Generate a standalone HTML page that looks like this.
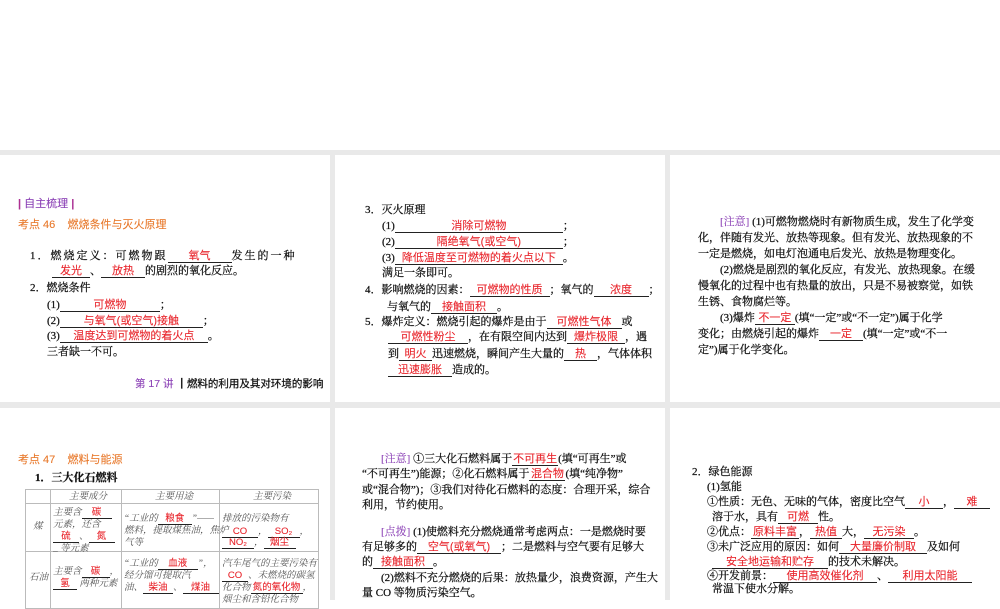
<!DOCTYPE html>
<html><head><meta charset="utf-8"><style>
*{margin:0;padding:0;box-sizing:border-box}
body{width:1000px;height:600px;position:relative;background:#fff;overflow:hidden;font-family:"Liberation Serif","Noto Serif CJK SC","Noto Sans CJK SC",serif;color:#111;font-size:11px;-webkit-text-stroke:0.25px #111}
.g{position:absolute;background:#e9e9e9}
.l{position:absolute;white-space:nowrap;line-height:14px;height:14px}
.b{display:inline-block;border-bottom:1px solid #222;color:#e8232a;-webkit-text-stroke:0.1px #e8232a;text-align:center;line-height:12px;font-family:"Liberation Sans","Noto Sans CJK SC",sans-serif}
.p{color:#8a3fb5;-webkit-text-stroke:0.1px #8a3fb5}
.o{color:#e8782a;-webkit-text-stroke:0.1px #e8782a;font-family:"Liberation Sans","Noto Sans CJK SC",sans-serif}
.t{position:absolute;border:1px solid #bbb}
.tc{position:absolute;font-size:9.5px;font-style:italic;color:#555;-webkit-text-stroke:0;line-height:12px;white-space:nowrap}
.tc .b{font-style:normal;font-size:9.5px;line-height:10px}
</style></head><body>
<div class="g" style="left:0;top:150px;width:1000px;height:5px"></div>
<div class="g" style="left:0;top:402px;width:1000px;height:6px"></div>
<div class="g" style="left:330px;top:150px;width:5px;height:450px"></div>
<div class="g" style="left:665px;top:150px;width:5px;height:450px"></div>

<!-- slide 1 -->
<div class="l p" style="left:18px;top:197px;font-family:'Liberation Sans','Noto Sans CJK SC',sans-serif"><b style="color:#b03090">|</b> 自主梳理 <b style="color:#b03090">|</b></div>
<div class="l o" style="left:18px;top:218px">考点 46&nbsp;&nbsp;&nbsp; 燃烧条件与灭火原理</div>
<div class="l" style="left:30px;top:249px;letter-spacing:2px">1．燃烧定义：可燃物跟<span class="b" style="width:64px;letter-spacing:0">氧气</span>发生的一种</div>
<div class="l" style="left:52px;top:264px"><span class="b" style="width:38px">发光</span>、<span class="b" style="width:44px">放热</span>的剧烈的氧化反应。</div>
<div class="l" style="left:30px;top:281px">2．燃烧条件</div>
<div class="l" style="left:47px;top:298px">(1)<span class="b" style="width:100px">可燃物</span>；</div>
<div class="l" style="left:47px;top:314px">(2)<span class="b" style="width:143px">与氧气(或空气)接触</span>；</div>
<div class="l" style="left:47px;top:329px">(3)<span class="b" style="width:148px">温度达到可燃物的着火点</span>。</div>
<div class="l" style="left:47px;top:345px">三者缺一不可。</div>
<div class="l" style="left:135px;top:377px;font-size:10.5px;font-family:'Liberation Sans','Noto Sans CJK SC',sans-serif"><span class="p">第 17 讲</span> <b>┃</b>燃料的利用及其对环境的影响</div>

<!-- slide 2 -->
<div class="l" style="left:365px;top:203px">3．灭火原理</div>
<div class="l" style="left:382px;top:219px">(1)<span class="b" style="width:168px">消除可燃物</span>；</div>
<div class="l" style="left:382px;top:235px">(2)<span class="b" style="width:168px">隔绝氧气(或空气)</span>；</div>
<div class="l" style="left:382px;top:251px">(3)<span class="b" style="width:168px">降低温度至可燃物的着火点以下</span>。</div>
<div class="l" style="left:382px;top:266px">满足一条即可。</div>
<div class="l" style="left:365px;top:283px">4．影响燃烧的因素：<span class="b" style="width:80px">可燃物的性质</span>；氧气的<span class="b" style="width:55px">浓度</span>；</div>
<div class="l" style="left:387px;top:300px">与氧气的<span class="b" style="width:66px">接触面积</span>。</div>
<div class="l" style="left:365px;top:315px">5．爆炸定义：燃烧引起的爆炸是由于<span class="b" style="width:75px">可燃性气体</span>或</div>
<div class="l" style="left:388px;top:330px"><span class="b" style="width:80px">可燃性粉尘</span>，在有限空间内达到<span class="b" style="width:58px">爆炸极限</span>，遇</div>
<div class="l" style="left:388px;top:347px">到<span class="b" style="width:33px">明火</span>迅速燃烧，瞬间产生大量的<span class="b" style="width:33px">热</span>，气体体积</div>
<div class="l" style="left:388px;top:363px"><span class="b" style="width:64px">迅速膨胀</span>造成的。</div>

<!-- slide 3 -->
<div class="l" style="left:720px;top:215px"><span class="p">[注意]</span> (1)可燃物燃烧时有新物质生成，发生了化学变</div>
<div class="l" style="left:698px;top:231px">化，伴随有发光、放热等现象。但有发光、放热现象的不</div>
<div class="l" style="left:698px;top:247px">一定是燃烧，如电灯泡通电后发光、放热是物理变化。</div>
<div class="l" style="left:720px;top:263px">(2)燃烧是剧烈的氧化反应，有发光、放热现象。在缓</div>
<div class="l" style="left:698px;top:279px">慢氧化的过程中也有热量的放出，只是不易被察觉，如铁</div>
<div class="l" style="left:698px;top:295px">生锈、食物腐烂等。</div>
<div class="l" style="left:720px;top:311px">(3)爆炸<span class="b" style="width:40px">不一定</span>(填“一定”或“不一定”)属于化学</div>
<div class="l" style="left:698px;top:327px">变化；由燃烧引起的爆炸<span class="b" style="width:44px">一定</span>(填“一定”或“不一</div>
<div class="l" style="left:698px;top:343px">定”)属于化学变化。</div>

<!-- slide 4 -->
<div class="l o" style="left:18px;top:453px">考点 47&nbsp;&nbsp;&nbsp; 燃料与能源</div>
<div class="l" style="left:35px;top:471px;font-weight:bold">1．三大化石燃料</div>
<div class="t" style="left:25px;top:489px;width:294px;height:120px"></div>
<div class="g" style="left:25px;top:503px;width:294px;height:1px;background:#bbb"></div>
<div class="g" style="left:25px;top:551px;width:294px;height:1px;background:#bbb"></div>
<div class="g" style="left:50px;top:489px;width:1px;height:120px;background:#bbb"></div>
<div class="g" style="left:121px;top:489px;width:1px;height:120px;background:#bbb"></div>
<div class="g" style="left:219px;top:489px;width:1px;height:120px;background:#bbb"></div>
<div class="tc" style="left:69px;top:491px">主要成分</div>
<div class="tc" style="left:155px;top:491px">主要用途</div>
<div class="tc" style="left:253px;top:491px">主要污染</div>
<div class="tc" style="left:33px;top:521px">煤</div>
<div class="tc" style="left:53px;top:507px">主要含<span class="b" style="width:30px">碳</span></div>
<div class="tc" style="left:53px;top:519px">元素，还含</div>
<div class="tc" style="left:53px;top:531px"><span class="b" style="width:26px">硫</span>、<span class="b" style="width:26px">氮</span></div>
<div class="tc" style="left:53px;top:543px">_ 等元素</div>
<div class="tc" style="left:124px;top:513px">“工业的<span class="b" style="width:34px">粮食</span>”——</div>
<div class="tc" style="left:124px;top:525px">燃料，提取煤焦油，焦炉</div>
<div class="tc" style="left:124px;top:537px">气等</div>
<div class="tc" style="left:222px;top:513px">排放的污染物有</div>
<div class="tc" style="left:222px;top:526px"><span class="b" style="width:36px">CO</span>，<span class="b" style="width:32px">SO₂</span>，</div>
<div class="tc" style="left:222px;top:537px"><span class="b" style="width:32px">NO₂</span>，<span class="b" style="width:32px">烟尘</span></div>
<div class="tc" style="left:29px;top:572px">石油</div>
<div class="tc" style="left:53px;top:566px">主要含<span class="b" style="width:28px">碳</span>，</div>
<div class="tc" style="left:53px;top:578px"><span class="b" style="width:24px">氢</span> 两种元素</div>
<div class="tc" style="left:124px;top:558px">“工业的<span class="b" style="width:40px">血液</span>”，</div>
<div class="tc" style="left:124px;top:570px">经分馏可提取汽</div>
<div class="tc" style="left:124px;top:582px">油、<span class="b" style="width:30px">柴油</span>、<span class="b" style="width:36px">煤油</span></div>
<div class="tc" style="left:222px;top:558px">汽车尾气的主要污染有</div>
<div class="tc" style="left:222px;top:570px"><span class="b" style="width:26px">CO</span>、未燃烧的碳氢</div>
<div class="tc" style="left:222px;top:582px">化合物<span class="b" style="width:52px">氮的氧化物</span>，</div>
<div class="tc" style="left:222px;top:594px">烟尘和含铅化合物</div>

<!-- slide 5 -->
<div class="l" style="left:381px;top:452px"><span class="p">[注意]</span> ①三大化石燃料属于<span class="b" style="width:46px">不可再生</span>(填“可再生”或</div>
<div class="l" style="left:362px;top:467px">“不可再生”)能源；②化石燃料属于<span class="b" style="width:36px">混合物</span>(填“纯净物”</div>
<div class="l" style="left:362px;top:483px">或“混合物”)；③我们对待化石燃料的态度：合理开采，综合</div>
<div class="l" style="left:362px;top:498px">利用，节约使用。</div>
<div class="l" style="left:381px;top:525px"><span class="p">[点拨]</span> (1)使燃料充分燃烧通常考虑两点：一是燃烧时要</div>
<div class="l" style="left:362px;top:540px">有足够多的<span class="b" style="width:84px">空气(或氧气)</span>；二是燃料与空气要有足够大</div>
<div class="l" style="left:362px;top:555px">的<span class="b" style="width:60px">接触面积</span>。</div>
<div class="l" style="left:381px;top:571px">(2)燃料不充分燃烧的后果：放热量少，浪费资源，产生大</div>
<div class="l" style="left:362px;top:586px">量 CO 等物质污染空气。</div>

<!-- slide 6 -->
<div class="l" style="left:692px;top:465px">2．绿色能源</div>
<div class="l" style="left:707px;top:480px">(1)氢能</div>
<div class="l" style="left:707px;top:495px">①性质：无色、无味的气体，密度比空气<span class="b" style="width:38px">小</span>，<span class="b" style="width:36px">难</span></div>
<div class="l" style="left:712px;top:510px">溶于水，具有<span class="b" style="width:40px">可燃</span>性。</div>
<div class="l" style="left:707px;top:525px">②优点：<span class="b" style="width:48px">原料丰富</span>，<span class="b" style="width:32px">热值</span>大，<span class="b" style="width:50px">无污染</span>。</div>
<div class="l" style="left:707px;top:540px">③未广泛应用的原因：如何<span class="b" style="width:88px">大量廉价制取</span>及如何</div>
<div class="l" style="left:712px;top:555px"><span class="b" style="width:116px">安全地运输和贮存</span>的技术未解决。</div>
<div class="l" style="left:707px;top:569px">④开发前景：<span class="b" style="width:104px">使用高效催化剂</span>、<span class="b" style="width:84px">利用太阳能</span></div>
<div class="l" style="left:712px;top:582px">常温下使水分解。</div>
</body></html>
